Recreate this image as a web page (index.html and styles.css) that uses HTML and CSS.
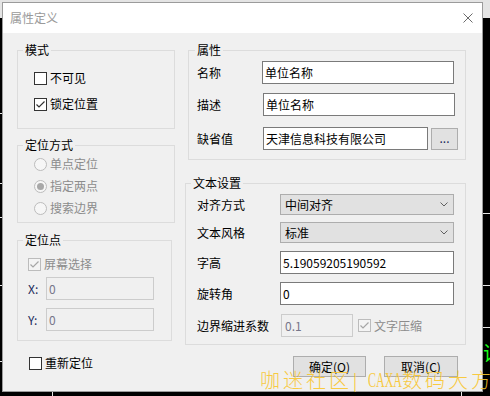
FILE: index.html
```html
<!DOCTYPE html>
<html lang="zh-CN">
<head>
<meta charset="utf-8">
<title>属性定义</title>
<link rel="stylesheet" href="styles.css">
</head>
<body>
<div class="win">
  <div class="titlebar">
    <span class="title">属性定义</span>
    <svg class="close" width="10" height="10" viewBox="0 0 10 10"><path d="M0.5 0.5L9.5 9.5M9.5 0.5L0.5 9.5"/></svg>
  </div>
  <div class="client">
    <div class="col col-left">
      <div class="group g-mode">
        <div class="cap">模式</div>
        <div class="gbody">
          <div class="opt mode-1"><span class="box"></span><span>不可见</span></div>
          <div class="opt mode-2"><span class="box"><svg class="tick" width="11" height="11" viewBox="0 0 11 11"><path d="M1.5 5.5L4 8L9.5 2.5"/></svg></span><span>锁定位置</span></div>
        </div>
      </div>
      <div class="group g-loc">
        <div class="cap">定位方式</div>
        <div class="gbody">
          <div class="opt dis loc-1"><span class="radio"></span><span>单点定位</span></div>
          <div class="opt dis loc-n"><span class="radio on"></span><span>指定两点</span></div>
          <div class="opt dis loc-n"><span class="radio"></span><span>搜索边界</span></div>
        </div>
      </div>
      <div class="group g-pt">
        <div class="cap">定位点</div>
        <div class="gbody">
          <div class="opt dis pt-1"><span class="box box-dis"><svg class="tick" width="11" height="11" viewBox="0 0 11 11"><path d="M1.5 5.5L4 8L9.5 2.5"/></svg></span><span>屏幕选择</span></div>
          <div class="field pt-x"><span class="xy-l">X:</span><span class="inp inp-dis inp-xy">0</span></div>
          <div class="field pt-y"><span class="xy-l">Y:</span><span class="inp inp-dis inp-xy">0</span></div>
        </div>
      </div>
      <div class="opt relocate"><span class="box"></span><span>重新定位</span></div>
    </div>

    <div class="col col-right">
      <div class="group g-attr">
        <div class="cap cap-r">属性</div>
        <div class="gbody">
          <div class="field at-1"><span class="lbl lbl-a0">名称</span><span class="inp inp-wide">单位名称</span></div>
          <div class="field at-2"><span class="lbl lbl-a">描述</span><span class="inp inp-wide">单位名称</span></div>
          <div class="field at-3"><span class="lbl lbl-a">缺省值</span><span class="inp inp-def">天津信息科技有限公司</span><span class="btn btn-dots">...</span></div>
        </div>
      </div>
      <div class="group g-text">
        <div class="cap">文本设置</div>
        <div class="gbody">
          <div class="field tx-1"><span class="lbl lbl-t">对齐方式</span><span class="sel"><span>中间对齐</span><svg class="chev" width="8" height="5" viewBox="0 0 8 5"><path d="M0.5 0.5L4 4L7.5 0.5"/></svg></span></div>
          <div class="field tx-2"><span class="lbl lbl-t">文本风格</span><span class="sel"><span>标准</span><svg class="chev" width="8" height="5" viewBox="0 0 8 5"><path d="M0.5 0.5L4 4L7.5 0.5"/></svg></span></div>
          <div class="field tx-3"><span class="lbl lbl-t">字高</span><span class="inp inp-t">5.19059205190592</span></div>
          <div class="field tx-3"><span class="lbl lbl-t">旋转角</span><span class="inp inp-t">0</span></div>
          <div class="field tx-5"><span class="lbl lbl-t1">边界缩进系数</span><span class="inp inp-dis inp-ind">0.1</span><span class="opt dis cmp"><span class="box box-dis"><svg class="tick" width="11" height="11" viewBox="0 0 11 11"><path d="M1.5 5.5L4 8L9.5 2.5"/></svg></span><span>文字压缩</span></span></div>
        </div>
      </div>
      <div class="buttons">
        <span class="btn btn-ok">确定(O)</span>
        <span class="btn btn-cancel">取消(C)</span>
      </div>
    </div>
  </div>
</div>

<div class="wm"><span class="wm-cn">咖迷社区</span><span class="wm-bar">|</span><span class="wm-lat"><span class="wm-lat-in">CAXA</span></span><span class="wm-cn">数码大方</span></div>

<div class="mark mr1"></div>
<div class="mark mr2"></div>
<div class="mark mr3"></div>
<div class="mark ml1"></div>
<div class="mark ml2"></div>
<div class="mark ml3"></div>
<div class="mark ml4"></div>
<div class="mark ml5"></div>
<div class="mark mb1"></div>
<div class="mark mb2"></div>
<div class="green gr1">证</div>
</body>
</html>
```

FILE: styles.css
```css
* { box-sizing: border-box; }
html, body { margin: 0; }
body {
  width: 490px;
  height: 396px;
  overflow: hidden;
  position: relative;
  padding: 2px 0 0 2px;
  background: linear-gradient(#e4e4e4 0 18px, #000 18px);
  font-family: "Noto Sans CJK SC", "Noto Sans", sans-serif;
  font-size: 12px;
  line-height: 16px;
  color: #000;
}

.win {
  width: 481px;
  height: 390px;
  border: 1px solid #9b9b9b;
  background: #f0f0f0;
}

.titlebar {
  height: 30px;
  background: #fff;
  display: flex;
  align-items: center;
  padding: 0 9px 0 7px;
}
.title { color: #9a9a9a; }
.close { margin-left: auto; stroke: #6b6b6b; stroke-width: 1; fill: none; }

.client { display: flex; padding: 17px 0 0 14px; }
.col { display: flex; flex-direction: column; align-items: flex-start; }
.col-left { width: 158px; }
.col-right { width: 281px; margin-left: 10px; }

.group { border: 1px solid #dcdcdc; }
.cap {
  width: fit-content;
  height: 14px;
  line-height: 14px;
  margin: -8px 0 0 5px;
  padding: 0 2px;
  background: #f0f0f0;
}
.cap-r { margin-left: 6px; }

/* option rows (checkbox / radio) */
.opt { display: flex; align-items: center; height: 20px; }
.opt.dis { color: #8c8c8c; }
.box {
  width: 13px; height: 13px;
  border: 1px solid #333;
  background: #fff;
  margin-right: 3px;
  flex: none;
}
.box-dis { border-color: #bcbcbc; background: #f4f4f4; }
.tick { display: block; fill: none; stroke: #333; stroke-width: 1.2; }
.box-dis .tick { stroke: #a6a6a6; }
.radio {
  width: 13px; height: 13px;
  border: 1px solid #bcbcbc;
  border-radius: 50%;
  background: #f6f6f6;
  margin-right: 3px;
  display: flex; align-items: center; justify-content: center;
  flex: none;
}
.radio.on::after {
  content: "";
  width: 7px; height: 7px;
  border-radius: 50%;
  background: #a8a8a8;
}

/* left column groups */
.g-mode { width: 158px; height: 79px; }
.g-mode .gbody { padding-left: 16px; }
.mode-1 { margin-top: 11px; }
.mode-2 { margin-top: 6px; }

.g-loc { width: 158px; height: 78px; margin-top: 16px; }
.g-loc .gbody { padding-left: 16px; }
.loc-1 { margin-top: 2px; }
.loc-n { margin-top: 2px; }

.g-pt { width: 155px; height: 101px; margin-top: 17px; }
.g-pt .gbody { padding-left: 10px; }
.pt-1 { margin-top: 7px; }
.pt-x { margin-top: 3px; }
.pt-y { margin-top: 8px; }
.xy-l { width: 18px; color: #1b2a5a; }
.inp-xy { width: 108px; padding-left: 3px; }

.relocate { margin-top: 12px; margin-left: 12px; }

/* fields */
.field { display: flex; align-items: center; }
.inp {
  display: flex; align-items: center;
  height: 23px;
  border: 1px solid #7a7a7a;
  background: #fff;
  padding: 0 2px;
  white-space: nowrap;
}
.inp-dis { border-color: #cccccc; background: #f0f0f0; color: #76768a; }
.lbl { flex: none; }

.g-attr { width: 278px; height: 110px; margin-left: 3px; }
.g-attr .gbody { padding-left: 8px; }
.lbl-a0 { width: 65px; }
.lbl-a { width: 66px; }
.inp-wide { width: 192px; }
.inp-def { width: 165px; }
.at-1 { margin-top: 4px; }
.at-2 { margin-top: 9px; }
.at-3 { margin-top: 11px; }

.btn {
  display: flex; align-items: center; justify-content: center;
  border: 1px solid #adadad;
  background: #e1e1e1;
}
.btn-dots { width: 27px; height: 22px; margin-left: 3px; color: #1b2a5a; align-items: flex-end; padding-bottom: 3px; }

.g-text { width: 281px; height: 162px; margin-top: 23px; }
.g-text .gbody { padding-left: 11px; }
.lbl-t { width: 83px; }
.lbl-t1 { width: 84px; }
.sel {
  width: 174px; height: 21px;
  display: flex; align-items: center; justify-content: space-between;
  border: 1px solid #adadad;
  background: #e1e1e1;
  padding: 0 5px 0 4px;
}
.chev { fill: none; stroke: #606060; stroke-width: 1; }
.inp-t { width: 174px; }
.tx-1 { margin-top: 4px; }
.tx-2 { margin-top: 7px; }
.tx-3 { margin-top: 8px; }
.tx-5 { margin-top: 9px; }
.inp-ind { width: 72px; padding-left: 3px; }
.cmp { margin-left: 5px; }

.buttons { display: flex; gap: 18px; margin-top: 11px; padding-left: 108px; }
.btn-ok { width: 73px; height: 21px; }
.btn-cancel { width: 74px; height: 21px; }

/* watermark overlay */
.wm {
  position: absolute;
  left: 260px;
  top: 370px;
  display: flex;
  font-size: 20px;
  line-height: 20px;
  color: #f9c62e;
  opacity: 0.9;
  white-space: nowrap;
  font-weight: 300;
}
.wm-cn { letter-spacing: 3px; }
.wm-bar { width: 16px; padding-left: 1px; font-family: "Liberation Serif", serif; }
.wm-lat { width: 34px; overflow: visible; font-family: "Liberation Serif", serif; }
.wm-lat-in { display: inline-block; transform: scaleX(0.6); transform-origin: left center; }

/* desktop remnants behind the dialog */
.mark { position: absolute; background: #e6e6e6; }
.mr1 { right: 0; top: 213px; width: 7px; height: 1px; }
.mr2 { right: 0; top: 285px; width: 7px; height: 1px; }
.mr3 { right: 0; top: 327px; width: 7px; height: 1px; }
.ml1 { left: 0; top: 113px; width: 2px; height: 1px; }
.ml2 { left: 0; top: 183px; width: 2px; height: 1px; }
.ml3 { left: 0; top: 217px; width: 2px; height: 1px; }
.ml4 { left: 0; top: 285px; width: 2px; height: 1px; }
.ml5 { left: 0; top: 361px; width: 2px; height: 1px; }
.mb1 { left: 52px; top: 392px; width: 1px; height: 4px; }
.mb2 { left: 461px; top: 392px; width: 1px; height: 4px; }
.green { position: absolute; color: #1aff1a; white-space: nowrap; }
.gr1 { left: 483px; top: 343px; font-size: 20px; line-height: 20px; }
```
